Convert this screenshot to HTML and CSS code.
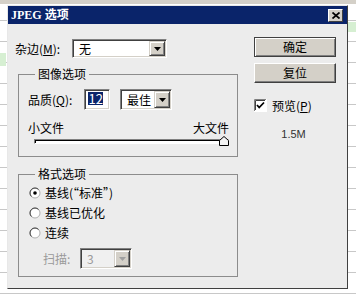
FILE: index.html
```html
<!DOCTYPE html>
<html lang="zh-CN">
<head>
  <meta charset="UTF-8" />
  <title>JPEG 选项</title>
  <link rel="stylesheet" href="styles.css">
</head>
<body>

  <div class="desk">
    <div class="dialog">

      <!-- Barra de titulo -->
      <div class="titlebar">
        <span class="title">JPEG 选项</span>
        <span class="close">
          <svg width="8" height="7" viewBox="0 0 8 7"><path d="M0.5 0.5 L7.5 6.5 M7.5 0.5 L0.5 6.5" stroke="#000" stroke-width="1.7" fill="none"/></svg>
        </span>
      </div>

      <div class="content">
        <div class="left">

          <div class="row matte">
            <span class="lbl lbl-matte">杂边(<u>M</u>):</span>
            <div class="combo combo-matte">
              <span class="combo-text">无</span>
              <span class="combo-btn"><svg width="7" height="4" viewBox="0 0 7 4"><polygon points="0,0 7,0 3.5,4" fill="#000"/></svg></span>
            </div>
          </div>

          <!-- Opciones de imagen -->
          <div class="group group-image">
            <div class="legend">图像选项</div>
            <div class="row quality">
              <span class="lbl lbl-quality">品质(<u>Q</u>):</span>
              <div class="field field-quality"><span class="sel">12</span></div>
              <div class="combo combo-quality">
                <span class="combo-text">最佳</span>
                <span class="combo-btn"><svg width="7" height="4" viewBox="0 0 7 4"><polygon points="0,0 7,0 3.5,4" fill="#000"/></svg></span>
              </div>
            </div>
            <div class="size-labels"><span>小文件</span><span>大文件</span></div>
            <div class="slider">
              <div class="track"></div>
              <svg class="thumb" width="10" height="10" viewBox="0 0 10 10"><path d="M0.5 9.5 V4.5 L5 0.5 L9.5 4.5 V9.5 Z" fill="#f4f4f4" stroke="#000"/></svg>
            </div>
          </div>

          <!-- Opciones de formato -->
          <div class="group group-format">
            <div class="legend">格式选项</div>
            <div class="radio first">
              <svg width="12" height="12" viewBox="0 0 12 12"><circle cx="6" cy="6" r="5" fill="#fff" stroke="#b0b0b0"/><path d="M2.46 9.54 A5 5 0 0 1 9.54 2.46" stroke="#404040" fill="none"/><circle cx="6" cy="6" r="1.8" fill="#000"/></svg>
              <span>基线(“标准”)</span>
            </div>
            <div class="radio">
              <svg width="12" height="12" viewBox="0 0 12 12"><circle cx="6" cy="6" r="5" fill="#fff" stroke="#b0b0b0"/><path d="M2.46 9.54 A5 5 0 0 1 9.54 2.46" stroke="#404040" fill="none"/></svg>
              <span>基线已优化</span>
            </div>
            <div class="radio">
              <svg width="12" height="12" viewBox="0 0 12 12"><circle cx="6" cy="6" r="5" fill="#fff" stroke="#b0b0b0"/><path d="M2.46 9.54 A5 5 0 0 1 9.54 2.46" stroke="#404040" fill="none"/></svg>
              <span>连续</span>
            </div>
            <div class="row scan">
              <span class="lbl lbl-scan">扫描:</span>
              <div class="combo combo-scan">
                <span class="combo-text">3</span>
                <span class="combo-btn"><svg width="7" height="4" viewBox="0 0 7 4"><polygon points="0,0 7,0 3.5,4" fill="#a0a0a0"/></svg></span>
              </div>
            </div>
          </div>

        </div>

        <div class="right">
          <div class="btn btn-default">确定</div>
          <div class="btn">复位</div>
          <div class="check">
            <svg width="13" height="13" viewBox="0 0 13 13"><rect x="0.5" y="0.5" width="12" height="12" fill="#fff" stroke="#fff"/><path d="M0.5 12 V0.5 H12" stroke="#808080" fill="none"/><path d="M1.5 11 V1.5 H11" stroke="#404040" fill="none"/><polyline points="3,6 5.2,8.5 10,3.5" stroke="#000" stroke-width="1.8" fill="none"/></svg>
            <span>预览(<u>P</u>)</span>
          </div>
          <div class="filesize">1.5M</div>
        </div>
      </div>

    </div>
  </div>

</body>
</html>
```

FILE: styles.css
```css
* {
  box-sizing: border-box;
}

body {
  margin: 0;
  width: 356px;
  height: 294px;
  overflow: hidden;
  font: 12px/14px "Noto Sans CJK SC", "Liberation Sans", sans-serif;
  color: #000;
  background:
    linear-gradient(#d4d0c8, #d4d0c8) 0 0 / 100% 4px no-repeat,
    linear-gradient(#d6efd2, #d6efd2) 0 53px / 6px 13px no-repeat,
    linear-gradient(#d6efd2, #d6efd2) 348px 22px / 8px 10px no-repeat,
    repeating-linear-gradient(to bottom, #fff 0 20px, #c8c8c8 20px 21px);
}

/* Fondo tipo hoja de calculo */
.desk {
  padding: 5px 0 0 7px;
}

.dialog {
  width: 341px;
  height: 284px;
  background: #ececec;
  border: 1px solid;
  border-color: #e8e8e8 #404040 #404040 #e8e8e8;
}

.titlebar {
  height: 18px;
  background: #0a246a;
  color: #fff;
  display: flex;
  align-items: center;
  justify-content: space-between;
  padding: 0 4px 0 3px;
}

.title {
  font-family: "Liberation Serif", "Noto Sans CJK SC", serif;
  font-weight: bold;
  font-size: 12px;
}

.close {
  width: 15px;
  height: 13px;
  background: #d4d0c8;
  border: 1px solid;
  border-color: #fff #404040 #404040 #fff;
  display: flex;
  align-items: center;
  justify-content: center;
}

.content {
  display: flex;
  padding: 13px 10px 0 0;
}

.left {
  width: 230px;
  padding: 2px 0 0 7px;
}

.right {
  width: 82px;
  margin-left: 16px;
}

.row {
  display: flex;
  align-items: center;
}

.lbl-matte { width: 57px; }
.lbl-quality { width: 56px; }

/* Combos y campos hundidos */
.combo,
.field {
  display: flex;
  background: #fff;
  border: 1px solid;
  border-color: #808080 #fff #fff #808080;
  box-shadow: inset 1px 1px #404040, inset -1px -1px #d4d0c8;
  padding: 1px;
}

.combo-text {
  flex: 1;
  display: flex;
  align-items: center;
  padding-left: 5px;
}

.combo-btn {
  width: 16px;
  background: #d4d0c8;
  border: 1px solid;
  border-color: #d4d0c8 #404040 #404040 #d4d0c8;
  box-shadow: inset 1px 1px #fff, inset -1px -1px #808080;
  display: flex;
  align-items: center;
  justify-content: center;
}

.combo-matte {
  width: 95px;
  height: 19px;
}

.group {
  margin-left: 3px;
  width: 220px;
  border: 1px solid #8c8c8c;
  padding: 0 8px 0 9px;
}

.legend {
  margin: -8px 0 0 7px;
  padding: 0 3px;
  width: fit-content;
  background: #ececec;
  line-height: 14px;
}

.group-image {
  margin-top: 16px;
  height: 83px;
}

.quality {
  margin-top: 8px;
}

.field-quality {
  width: 26px;
  height: 21px;
  padding: 2px 0 0 3px;
}

.sel {
  background: #0a246a;
  color: #fff;
  font-size: 13px;
  line-height: 13px;
  height: 13px;
  padding: 0 0.5px;
}

.combo-quality {
  margin-left: 10px;
  width: 52px;
  height: 21px;
}

.size-labels {
  display: flex;
  justify-content: space-between;
  margin-top: 11px;
}

.slider {
  display: flex;
  align-items: center;
  height: 10px;
  margin: 1px 0 0 6px;
}

.track {
  flex: 1;
  height: 5px;
  background: #fff;
  border: 1px solid;
  border-color: #808080 #fff #fff #808080;
  box-shadow: inset 1px 1px #000;
}

.thumb {
  margin-left: -10px;
}

.group-format {
  margin-top: 17px;
  height: 103px;
}

.radio {
  display: flex;
  align-items: center;
  height: 20px;
}

.radio.first {
  margin-top: 2px;
}

.radio svg {
  margin: 0 4px 0 1px;
}

.scan {
  margin-top: 5px;
}

.lbl-scan {
  margin-left: 15px;
  width: 37px;
  color: #9a9a9a;
}

.combo-scan {
  width: 52px;
  height: 21px;
  background: #f0f0f0;
  color: #9a9a9a;
}

/* Botones */
.btn {
  height: 20px;
  display: flex;
  align-items: center;
  justify-content: center;
  background: #d4d0c8;
  border: 1px solid;
  border-color: #fff #404040 #404040 #fff;
  box-shadow: inset -1px -1px #808080;
}

.btn-default {
  border-color: #404040;
  box-shadow: inset 1px 1px #fff, inset -1px -1px #808080;
}

.btn + .btn {
  margin-top: 6px;
}

.check {
  display: flex;
  align-items: center;
  margin-top: 16px;
  height: 13px;
}

.check svg {
  margin-right: 5px;
}

.filesize {
  margin-top: 15px;
  padding-right: 3px;
  text-align: center;
  font: 11px/14px "Liberation Sans", sans-serif;
  color: #333;
}
```
